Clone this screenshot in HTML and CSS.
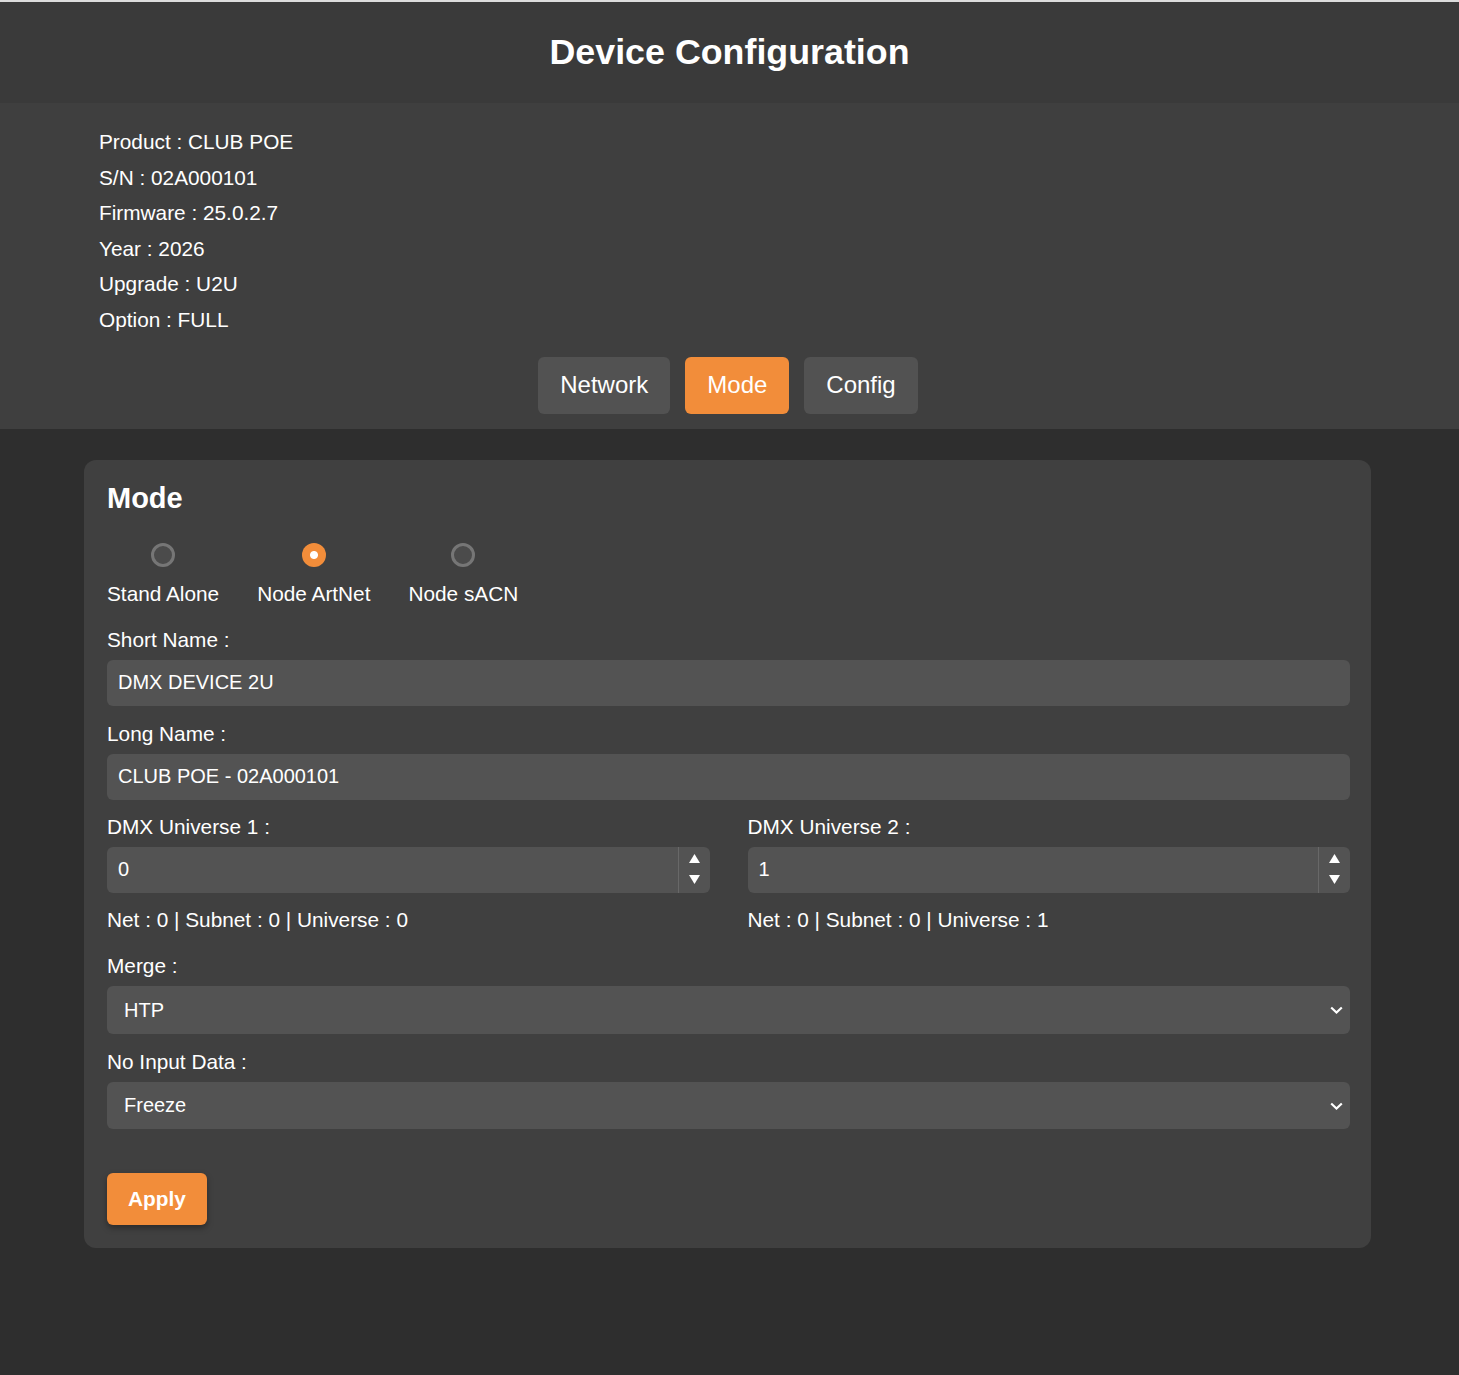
FILE: index.html
```html
<!DOCTYPE html>
<html lang="en">
<head>
	<meta charset="UTF-8">
	<title>Device Configuration</title>
	<link rel="stylesheet" href="styles.css">
</head>
<body>
	<header class="top">
		<h1>Device Configuration</h1>
	</header>

	<section class="info">
		<div class="info-line">Product : CLUB POE</div>
		<div class="info-line">S/N : 02A000101</div>
		<div class="info-line">Firmware : 25.0.2.7</div>
		<div class="info-line">Year : 2026</div>
		<div class="info-line">Upgrade : U2U</div>
		<div class="info-line">Option : FULL</div>
		<nav class="tabs">
			<button class="tab" type="button">Network</button>
			<button class="tab active" type="button">Mode</button>
			<button class="tab" type="button">Config</button>
		</nav>
	</section>

	<main class="main">
		<form class="card" id="modeForm">
			<h2>Mode</h2>

			<div class="radios">
				<label class="radio-item">
					<input type="radio" name="mode" value="standalone">
					<span>Stand Alone</span>
				</label>
				<label class="radio-item">
					<input type="radio" name="mode" value="artnet" checked>
					<span>Node ArtNet</span>
				</label>
				<label class="radio-item">
					<input type="radio" name="mode" value="sacn">
					<span>Node sACN</span>
				</label>
			</div>

			<div class="field">
				<label for="shortName">Short Name :</label>
				<input class="text-input" id="shortName" type="text" value="DMX DEVICE 2U">
			</div>

			<div class="field field-tight">
				<label for="longName">Long Name :</label>
				<input class="text-input" id="longName" type="text" value="CLUB POE - 02A000101">
			</div>

			<div class="universes">
				<div class="field">
					<label for="uni1">DMX Universe 1 :</label>
					<div class="number-box">
						<input class="number-input" id="uni1" type="number" value="0">
						<span class="spinner">
							<svg width="11" height="9" viewBox="0 0 11 9"><polygon points="5.5,0 11,9 0,9" fill="#fff"/></svg>
							<svg width="11" height="9" viewBox="0 0 11 9"><polygon points="0,0 11,0 5.5,9" fill="#fff"/></svg>
						</span>
					</div>
					<p class="net">Net : 0 | Subnet : 0 | Universe : 0</p>
				</div>
				<div class="field">
					<label for="uni2">DMX Universe 2 :</label>
					<div class="number-box">
						<input class="number-input" id="uni2" type="number" value="1">
						<span class="spinner">
							<svg width="11" height="9" viewBox="0 0 11 9"><polygon points="5.5,0 11,9 0,9" fill="#fff"/></svg>
							<svg width="11" height="9" viewBox="0 0 11 9"><polygon points="0,0 11,0 5.5,9" fill="#fff"/></svg>
						</span>
					</div>
					<p class="net">Net : 0 | Subnet : 0 | Universe : 1</p>
				</div>
			</div>

			<div class="field">
				<label for="merge">Merge :</label>
				<div class="select-box">
					<select class="select-input" id="merge">
						<option>HTP</option>
						<option>LTP</option>
					</select>
					<svg class="chevron" width="13" height="8" viewBox="0 0 13 8"><polyline points="1.2,1.5 6.5,6.5 11.8,1.5" fill="none" stroke="#fff" stroke-width="2.2"/></svg>
				</div>
			</div>

			<div class="field">
				<label for="noInput">No Input Data :</label>
				<div class="select-box">
					<select class="select-input" id="noInput">
						<option>Freeze</option>
						<option>Blackout</option>
					</select>
					<svg class="chevron" width="13" height="8" viewBox="0 0 13 8"><polyline points="1.2,1.5 6.5,6.5 11.8,1.5" fill="none" stroke="#fff" stroke-width="2.2"/></svg>
				</div>
			</div>

			<button class="apply" type="button">Apply</button>
		</form>
	</main>
</body>
</html>
```

FILE: styles.css
```css
html, body {
	padding: 0;
	margin: 0;
}
body {
	background: #2e2e2e;
	color: #fff;
	font-family: "Liberation Sans", Arial, sans-serif;
	font-size: 20.8px;
	min-height: 1375px;
}

/* header */
.top {
	border-top: 2px solid #dcdcdc;
	background: #3a3a3a;
	height: 101px;
	display: flex;
	align-items: center;
	justify-content: center;
}
.top h1 {
	margin: 0;
	font-size: 35.8px;
	font-weight: bold;
}

/* device info */
.info {
	background: #3f3f3f;
	padding: 21px 99px 15px;
}
.info-line {
	line-height: 35.6px;
}
.tabs {
	display: flex;
	justify-content: center;
	gap: 15px;
	margin-top: 19px;
	padding-right: 3px;
}
.tab {
	border: none;
	border-radius: 6px;
	background: #525252;
	color: #fff;
	font-family: inherit;
	font-size: 24px;
	padding: 14.7px 22px;
	cursor: pointer;
}
.tab.active {
	background: #f28d3a;
}

/* card */
.main {
	padding: 31px 88px 0 84px;
}
.card {
	background: #404040;
	border-radius: 12px;
	padding: 22px 21px 23px 23px;
}
.card h2 {
	margin: 0;
	font-size: 29px;
	font-weight: bold;
}
.radios {
	display: flex;
	gap: 38px;
	margin: 27.6px 0 22px;
}
.radio-item {
	display: flex;
	flex-direction: column;
	align-items: center;
	gap: 15px;
	cursor: pointer;
}
.radio-item input {
	appearance: none;
	-webkit-appearance: none;
	margin: 0;
	width: 24px;
	height: 24px;
	border-radius: 50%;
	border: 3px solid #767676;
	background: #4b4b4b;
	box-sizing: border-box;
}
.radio-item input:checked {
	border: none;
	background: radial-gradient(circle, #fff 0 3.5px, #f28d3a 4.5px);
}

.field {
	margin-bottom: 16px;
}
.field-tight {
	margin-bottom: 15px;
}
.field label {
	display: block;
	margin-bottom: 8px;
}
.text-input, .number-box, .select-box {
	box-sizing: border-box;
	width: 100%;
	height: 46px;
	background: #535353;
	border: none;
	border-radius: 6px;
	color: #fff;
	font-family: inherit;
	font-size: 20px;
}
.select-box {
	height: 47.5px;
}
.text-input {
	display: block;
	padding: 0 11px;
	outline: none;
}

.universes {
	display: grid;
	grid-template-columns: 1fr 1fr;
	gap: 38px;
}
.universes .field {
	margin-bottom: 0;
}
.number-box {
	display: flex;
}
.number-input {
	flex: 1;
	min-width: 0;
	background: transparent;
	border: none;
	outline: none;
	color: #fff;
	font-family: inherit;
	font-size: 20px;
	padding: 0 11px;
	-moz-appearance: textfield;
}
.number-input::-webkit-inner-spin-button,
.number-input::-webkit-outer-spin-button {
	-webkit-appearance: none;
	margin: 0;
}
.spinner {
	width: 32px;
	border-left: 1px solid #686868;
	display: flex;
	flex-direction: column;
	align-items: center;
	justify-content: center;
	gap: 12px;
	padding-bottom: 2px;
	box-sizing: border-box;
}
.net {
	margin: 15px 0 22.5px;
}

.select-box {
	position: relative;
}
.select-input {
	appearance: none;
	-webkit-appearance: none;
	width: 100%;
	height: 100%;
	background: transparent;
	border: none;
	outline: none;
	color: #fff;
	font-family: inherit;
	font-size: 20px;
	padding: 0 17px;
}
.chevron {
	position: absolute;
	right: 7px;
	top: 20px;
	pointer-events: none;
}

.apply {
	margin-top: 28px;
	height: 52px;
	padding: 0 21px;
	border: none;
	border-radius: 6px;
	background: #f28d3a;
	color: #fff;
	font-family: inherit;
	font-size: 20.8px;
	font-weight: bold;
	box-shadow: 0 3px 6px rgba(0, 0, 0, 0.35);
	cursor: pointer;
}
```
